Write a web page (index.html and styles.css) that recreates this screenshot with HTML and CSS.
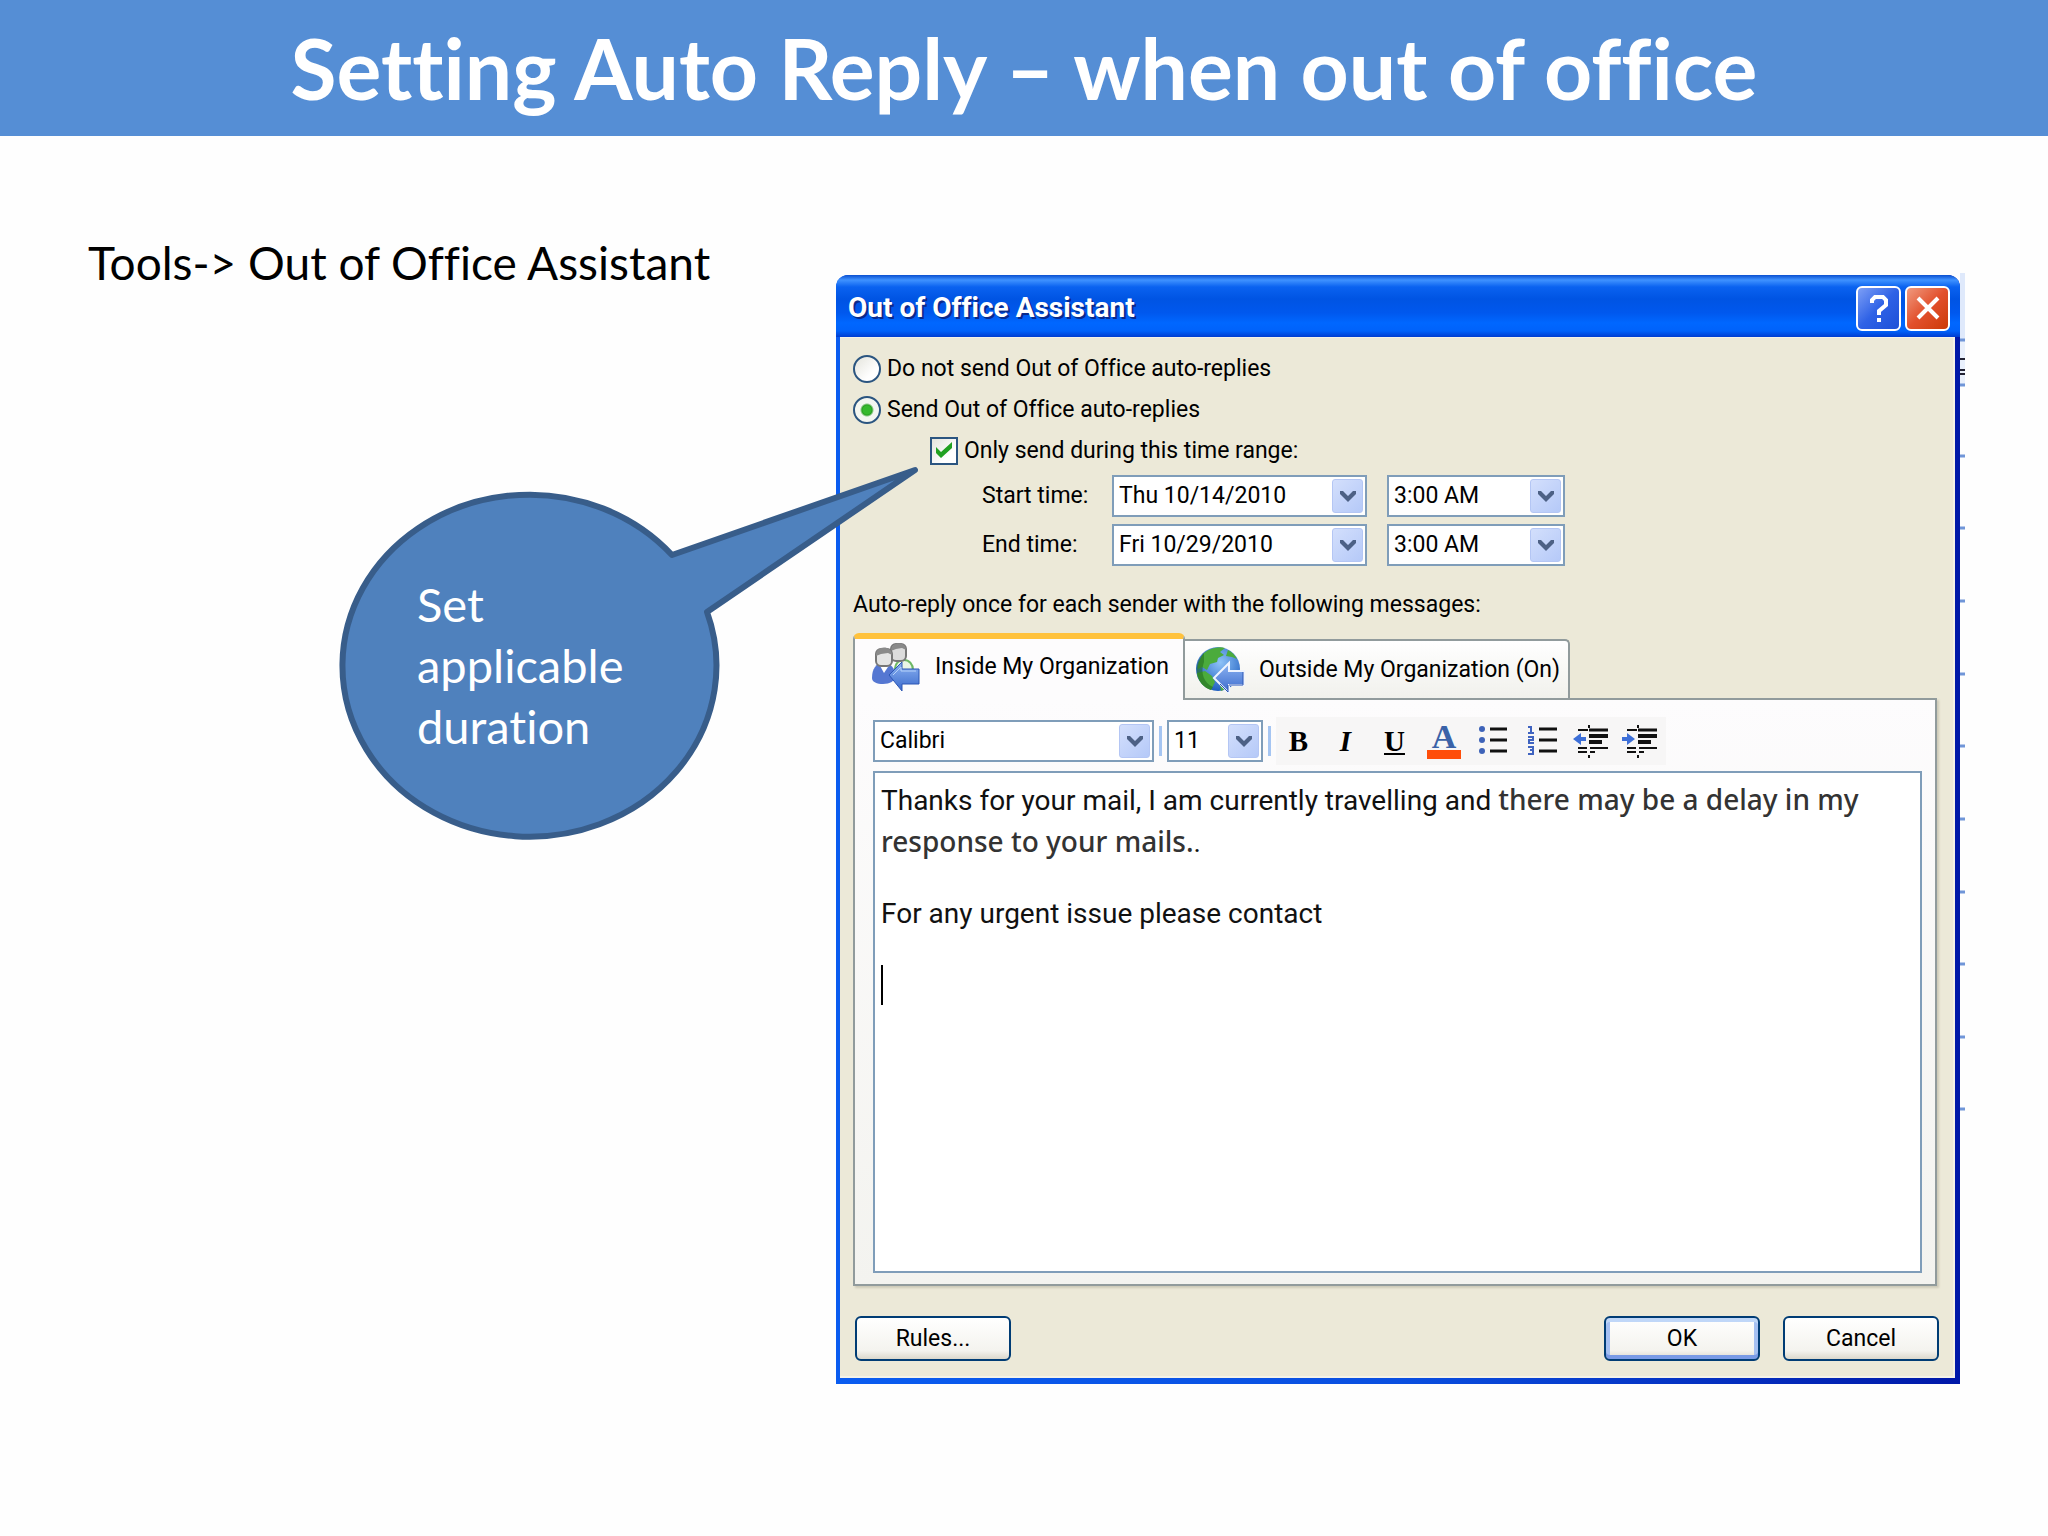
FILE: index.html
```html
<!DOCTYPE html>
<html lang="en">
<head>
<meta charset="utf-8">
<title>Setting Auto Reply</title>
<link rel="stylesheet" href="styles.css">
</head>
<body>
<svg class="defs" aria-hidden="true">
  <defs>
    <linearGradient id="arrow-fill" x1="0" y1="0" x2="0" y2="1"><stop offset="0" stop-color="#8db4f2"/><stop offset="1" stop-color="#3a69cc"/></linearGradient>
    <radialGradient id="globe-fill" cx="0.55" cy="0.35" r="0.65"><stop offset="0" stop-color="#8fc3f8"/><stop offset="1" stop-color="#1f5fc0"/></radialGradient>
    <symbol id="chevron" viewBox="0 0 18 14"><path d="M1 2h3l5 5 5-5h3v3l-8 8-8-8z" fill="#4d6185"/></symbol>
  </defs>
</svg>
<header class="banner"><h1 class="banner-title">Setting Auto Reply – when out of office</h1></header>
<main class="slide">
  <p class="path">Tools-&gt; Out of Office Assistant</p>

  <div class="shot">
    <section class="dialog" aria-labelledby="dialog-title">
      <div class="titlebar">
        <h2 class="dialog-title" id="dialog-title">Out of Office Assistant</h2>
        <button class="caption-btn" type="button" aria-label="Help"><svg width="24" height="30" viewBox="0 0 24 30"><path d="M5 10V7l3-3h8l3 3v5l-7 6v4" fill="none" stroke="#fff" stroke-width="4"/><path d="M10 25h4v4h-4z" fill="#fff"/></svg></button>
        <button class="caption-btn caption-close" type="button" aria-label="Close"><svg width="28" height="28" viewBox="0 0 28 28"><path d="M4 4l20 20M24 4L4 24" stroke="#fff" stroke-width="4"/></svg></button>
      </div>
      <form class="content">
        <label class="choice"><input class="radio" type="radio" name="mode">Do not send Out of Office auto-replies</label>
        <label class="choice"><input class="radio" type="radio" name="mode" checked>Send Out of Office auto-replies</label>
        <label class="choice choice-nested"><input class="check" type="checkbox" checked><svg class="tick" width="18" height="18" viewBox="0 0 18 18"><path d="M1 6l5 5L17 1v6L6 17 1 12z" fill="#21a121"/></svg>Only send during this time range:</label>
        <div class="times">
          <label for="start-date">Start time:</label>
          <span class="combo"><select id="start-date" class="select"><option>Thu 10/14/2010</option></select><span class="drop"><svg width="18" height="14"><use href="#chevron"/></svg></span></span>
          <span class="combo"><select class="select" aria-label="Start hour"><option>3:00 AM</option></select><span class="drop"><svg width="18" height="14"><use href="#chevron"/></svg></span></span>
          <label for="end-date">End time:</label>
          <span class="combo"><select id="end-date" class="select"><option>Fri 10/29/2010</option></select><span class="drop"><svg width="18" height="14"><use href="#chevron"/></svg></span></span>
          <span class="combo"><select class="select" aria-label="End hour"><option>3:00 AM</option></select><span class="drop"><svg width="18" height="14"><use href="#chevron"/></svg></span></span>
        </div>
        <p class="hint">Auto-reply once for each sender with the following messages:</p>
        <div class="tabs" role="tablist">
          <button class="tab tab-active" type="button" role="tab" aria-selected="true">
            <svg width="50" height="50" viewBox="0 0 50 50">
              <path d="M24 28c0-7 4-10 9-10s9 4 9 10v6H24z" fill="#e9f6e6" stroke="#6db864" stroke-width="2"/>
              <path d="M1 36c0-9 4-15 11-15 8 0 12 5 12 13 0 5-5 8-12 8-6 0-11-2-11-6z" fill="#5577d2"/>
              <path d="M8 22l5 9 6-9z" fill="#fff"/>
              <rect x="20" y="2" width="15" height="17" rx="5" fill="#dcdcdc" stroke="#777" stroke-width="2"/>
              <path d="M20 9c0-10 15-10 15-1l-4-2-6 1z" fill="#8a8a8a"/>
              <rect x="5" y="7" width="16" height="17" rx="5" fill="#e4e4e4" stroke="#777" stroke-width="2"/>
              <path d="M5 14C4 3 21 3 21 13l-4-2-7 1z" fill="#8a8a8a"/>
              <path d="M18 33l13-13v7h17v15H31v7z" fill="url(#arrow-fill)" stroke="#2c56b4" stroke-width="1"/>
              <path d="M22 33l8-8v4h15" fill="none" stroke="#b5d1fa" stroke-width="1"/>
            </svg>Inside My Organization</button>
          <button class="tab" type="button" role="tab" aria-selected="false">
            <svg width="50" height="50" viewBox="0 0 50 50">
              <circle cx="23" cy="24" r="22" fill="url(#globe-fill)"/>
              <path d="M9 8C15 3 24 1 30 3l-5 4 4 3-6 3-1 4-7 2-3 6-5-3-4 2c0-6 3-12 6-16zM33 5c4 2 7 5 9 9l-5-2-6-1zM2 28l8-2 7 5 3 6-4 8C8 42 3 36 2 28zM24 32l8-2 2 12-8 4z" fill="#4bab3c"/>
              <path d="M9 8c-6 6-8 13-7 20 1 8 7 15 14 17l2-3C9 38 5 28 9 17z" fill="#23701f" opacity="0.6"/>
              <path d="M19 33l15-15v8h15v14H34v8z" fill="url(#arrow-fill)" stroke="#eef4ff" stroke-width="2"/>
              <path d="M33 40v7l-8-8M34 40h14V27" fill="none" stroke="#2c56b4" stroke-width="1"/>
            </svg>Outside My Organization (On)</button>
        </div>
        <div class="panel">
          <div class="toolbar">
            <span class="combo combo-font"><select class="select" aria-label="Font"><option>Calibri</option></select><span class="drop"><svg width="18" height="14"><use href="#chevron"/></svg></span></span>
            <span class="sep"></span>
            <span class="combo combo-size"><select class="select" aria-label="Font size"><option>11</option></select><span class="drop"><svg width="18" height="14"><use href="#chevron"/></svg></span></span>
            <span class="sep"></span>
            <div class="tools">
              <button class="tool tool-bold" type="button">B</button>
              <button class="tool tool-italic" type="button">I</button>
              <button class="tool tool-underline" type="button">U</button>
              <button class="tool tool-color" type="button">A</button>
              <button class="tool" type="button" aria-label="Bullets"><svg width="30" height="32" viewBox="0 0 30 32"><g fill="#3d62b8"><circle cx="4" cy="4" r="3"/><circle cx="4" cy="15" r="3"/><circle cx="4" cy="26" r="3"/></g><path d="M12 4h17M12 15h17M12 26h17" stroke="#111" stroke-width="3"/></svg></button>
              <button class="tool" type="button" aria-label="Numbering"><svg width="32" height="32" viewBox="0 0 32 32"><path d="M2 2h3v6M2 8h6M2 12h5v3H3v3h5M2 22h5v3H4h3v4H2" fill="none" stroke="#3f63c0" stroke-width="2"/><path d="M13 4h18M13 15h18M13 26h18" stroke="#111" stroke-width="3"/></svg></button>
              <button class="tool" type="button" aria-label="Decrease indent"><svg width="36" height="34" viewBox="0 0 36 34"><path d="M5 6h10M5 24h9M5 28h9M17 24h18M17 28h5" stroke="#111" stroke-width="2"/><path d="M16 6h19" stroke="#111" stroke-width="3"/><path d="M16 12h19M16 18h13" stroke="#111" stroke-width="4"/><path d="M16 1v3M16 31v3" stroke="#111" stroke-width="2"/><path d="M0 15l8-6v4h5v4H8v4z" fill="#3d6fd8"/></svg></button>
              <button class="tool" type="button" aria-label="Increase indent"><svg width="36" height="34" viewBox="0 0 36 34"><path d="M5 6h10M5 24h9M5 28h9M17 24h18M17 28h5" stroke="#111" stroke-width="2"/><path d="M16 6h19" stroke="#111" stroke-width="3"/><path d="M16 12h19M16 18h13" stroke="#111" stroke-width="4"/><path d="M16 1v3M16 31v3" stroke="#111" stroke-width="2"/><path d="M13 15L5 9v4H0v4h5v4z" fill="#3d6fd8"/></svg></button>
            </div>
          </div>
          <div class="editor" role="textbox" aria-multiline="true" aria-label="Auto-reply message" contenteditable="true" spellcheck="false">
            <p class="message">Thanks for your mail, I am currently travelling and <span class="retyped">there may be a delay in my<br>response to your mails.</span>.</p>
            <p class="message">For any urgent issue please contact</p>
            <p class="message"><span class="caret"></span></p>
          </div>
        </div>
        <div class="actions">
          <button class="btn" type="button">Rules...</button>
          <button class="btn btn-default" type="submit">OK</button>
          <button class="btn" type="button">Cancel</button>
        </div>
      </form>
    </section>
    <svg class="behind" width="5" height="850" viewBox="0 0 5 850" aria-hidden="true">
      <path d="M0 0h5v66H0z" fill="#dfe9fb"/><path d="M0 66h5v46H0z" fill="#e9f0fc"/>
      <path d="M0 67h5M0 112h5M0 183h5M0 255h5M0 328h5M0 401h5M0 473h5M0 546h5M0 619h5M0 691h5M0 764h5M0 836h5" stroke="#7096d8" stroke-width="3"/>
      <path d="M0 86h5M0 97h5M0 101h5" stroke="#223" stroke-width="2"/>
    </svg>
  </div>

  <div class="callout">
    <svg width="590" height="380" viewBox="0 0 590 380" aria-hidden="true"><path d="M343 92L586 7 378 149A187 171 0 1 1 343 92Z" fill="#4f81bd" stroke="#385d8a" stroke-width="6" stroke-linejoin="round"/></svg>
    <p class="callout-text">Set applicable duration</p>
  </div>
</main>
</body>
</html>
```
FILE: styles.css
```css
* { box-sizing: border-box; }
body { margin: 0; background: #fefefe; color: #000; font-family: Lato, "Liberation Sans", sans-serif; font-variant-ligatures: none; }
p, h1, h2 { margin: 0; }
svg { display: block; flex: none; }
button, select { font: inherit; color: inherit; }
.defs { position: absolute; width: 0; height: 0; }

.banner { display: flex; align-items: center; justify-content: center; height: 136px; background: #558ed5; }
.banner-title { font-size: 84px; line-height: 100px; font-weight: 700; color: #fff; }

.slide { position: relative; display: grid; grid-template-columns: 748fr 1129fr; padding: 137px 83px 0 88px; }
.path { margin-top: -38px; font-size: 46px; line-height: 56px; }

.shot { display: flex; align-items: flex-start; font-family: Roboto, "Liberation Sans", sans-serif; font-size: 23px; line-height: 28px; }
.dialog { flex: 1; margin-top: 2px; padding: 0 5px 6px 4px; background: linear-gradient(90deg, #0a5cf0, #0a4fe0 50%, #0018a8); border-radius: 12px 12px 0 0; }
.titlebar { display: flex; align-items: center; gap: 4px; height: 62px; margin: 0 -5px 0 -4px; padding: 4px 10px 0 12px; border-radius: 12px 12px 0 0; background: linear-gradient(#0a4fd0 0, #3f92ff 5px, #0a62f0 12px, #0054e3 24px, #0058ee 38px, #0067ff 48px, #0062fa 56px, #003dd0 62px); }
.dialog-title { flex: 1; font-size: 28px; line-height: 32px; font-weight: 700; color: #fff; text-shadow: 2px 2px 0 #0a2a8c; }
.caption-btn { display: flex; align-items: center; justify-content: center; width: 45px; height: 45px; padding: 0; border: 2px solid #fff; border-radius: 6px; background: linear-gradient(135deg, #7d9ff6, #2f62e6 50%, #1d50d8); }
.caption-close { background: linear-gradient(135deg, #f09a80, #e2502c 50%, #cc3a08); }

.content { padding: 10px 14px 15px 13px; background: #ece9d8; border: solid #f4f2e8; border-width: 1px 2px 2px 0; }
.choice { display: flex; align-items: center; gap: 6px; height: 41px; position: relative; }
.choice-nested { margin-left: 77px; }
.radio, .check { appearance: none; flex: none; width: 28px; height: 28px; margin: 0; border: 2px solid #2b5580; background: linear-gradient(135deg, #e4e4dc, #fff 70%); }
.radio { border-radius: 50%; }
.radio:checked { background: radial-gradient(circle, #35b92c 0 4px, #2aa022 5px, #f4f6f0 7px); }
.tick { position: absolute; left: 5px; top: 11px; }

.times { display: grid; grid-template-columns: 110px 255px 178px; column-gap: 20px; row-gap: 7px; align-items: center; margin: 4px 0 0 129px; }
.combo { display: grid; grid-template-columns: 1fr 36px; height: 42px; border: 2px solid #7f9db9; background: #fff; }
.select { appearance: none; grid-area: 1 / 1 / 2 / 3; width: 100%; padding: 0 0 0 5px; border: 0; background: none; }
.drop { grid-area: 1 / 2; display: flex; align-items: center; justify-content: center; margin: 2px 2px 2px 3px; border: 1px solid #b4c6f4; border-radius: 3px; background: linear-gradient(135deg, #d3dffc, #b5c9f8); pointer-events: none; }
.combo-font { width: 281px; }
.combo-size { width: 96px; }

.hint { margin-top: 25px; }
.tabs { display: flex; align-items: flex-end; margin-top: 14px; }
.tab { display: flex; align-items: center; gap: 14px; height: 59px; padding: 0 8px 0 10px; border: 2px solid #919b9c; border-left: 0; border-bottom: 0; border-radius: 0 5px 0 0; background: linear-gradient(#fff, #f1f1ec); }
.tab-active { position: relative; height: 67px; margin-bottom: -2px; padding: 0 14px 6px 16px; border: 2px solid #919b9c; border-top: 6px solid #ffc23c; border-bottom: 0; border-radius: 6px 6px 0 0; background: #fdfcfd; }
.panel { width: calc(100% - 2px); padding: 17px 13px 11px 18px; border: 2px solid #919b9c; background: linear-gradient(#fdfcfd, #f3f3ef); box-shadow: 2px 2px 2px #cdcab8; }
.toolbar { display: flex; align-items: center; gap: 5px; height: 48px; }
.sep { width: 3px; height: 30px; background: #a5c5f2; }
.tools { display: flex; align-items: center; height: 48px; padding-right: 2px; background: #f7f6f6; }
.tool { display: flex; align-items: center; justify-content: center; width: 49px; height: 40px; padding: 0; border: 0; background: none; font: 700 29px/28px "Liberation Serif", serif; }
.tool-bold { width: 45px; }
.tool-italic { font-style: italic; }
.tool-underline { text-decoration: underline; }
.tool-color { width: 34px; height: 36px; margin: 0 7px 0 8px; border-bottom: 9px solid #ff4e0a; color: #3a62a8; font-size: 34px; }

.editor { height: 502px; margin-top: 6px; padding: 6px; border: 2px solid #7f9db9; background: #fff; font-size: 28px; line-height: 40px; outline: 0; }
.message { margin-bottom: 31px; color: #111; }
.retyped { font-family: "Noto Sans", sans-serif; font-weight: 500; color: #333; }
.caret { display: block; width: 2px; height: 40px; background: #000; }

.actions { display: flex; gap: 23px; margin-top: 30px; padding: 0 0 0 2px; }
.btn { width: 156px; height: 45px; padding: 0; border: 2px solid #003c74; border-radius: 6px; background: linear-gradient(#fff, #f4f3ee 80%, #dcd8cc); }
.btn:first-child { margin-right: auto; }
.btn-default { box-shadow: inset 0 4px 0 #c0d7f8, inset 0 -4px 0 #7a9be6, inset 4px 0 0 #a5c0f2, inset -4px 0 0 #a5c0f2; }

.callout { position: absolute; left: 329px; top: 327px; }
.callout-text { position: absolute; left: 88px; top: 111px; width: 240px; font-size: 47px; line-height: 61px; color: #fff; }
```
